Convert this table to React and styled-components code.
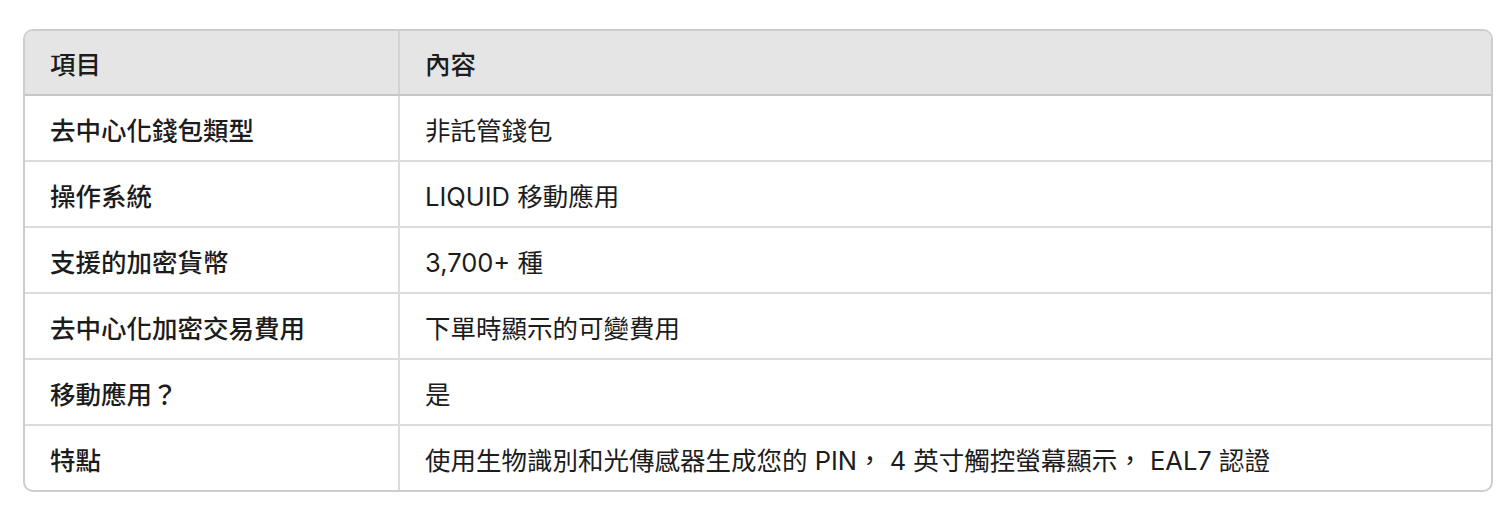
import styled, { createGlobalStyle } from 'styled-components';

const GlobalStyle = createGlobalStyle`
  body {
    margin: 0;
    background: #ffffff;
    font-family: Inter, "Noto Sans CJK TC", "Noto Sans", sans-serif;
    color: #1c1c1c;
  }
`;

const Page = styled.div`
  padding: 29px 19px 0 23px;
`;

const Frame = styled.div`
  border: 2px solid #cdcdcd;
  border-radius: 10px;
  overflow: hidden;
`;

const Table = styled.table`
  width: 100%;
  border-collapse: collapse;
  table-layout: fixed;
`;

const HeadCell = styled.th`
  background: #e5e5e5;
  height: 63px;
  padding: 0 0 0 25px;
  text-align: left;
  font-size: 25.5px;
  font-weight: 500;
  border-bottom: 2px solid #c6c6c6;
  width: ${props => props.w || 'auto'};
  & + & {
    border-left: 2px solid #d2d2d2;
  }
`;

const Row = styled.tr`
  & + & td {
    border-top: 2px solid #dcdcdc;
  }
`;

const Cell = styled.td`
  height: 64px;
  padding: 0 0 0 25px;
  font-size: 25.5px;
  font-weight: ${props => props.label ? 500 : 400};
  white-space: pre;
  & + & {
    border-left: 2px solid #dcdcdc;
  }
`;

const rows = [
  ['去中心化錢包類型', '非託管錢包'],
  ['操作系統', 'LIQUID 移動應用'],
  ['支援的加密貨幣', '3,700+ 種'],
  ['去中心化加密交易費用', '下單時顯示的可變費用'],
  ['移動應用？', '是'],
  ['特點', '使用生物識別和光傳感器生成您的 PIN， 4 英寸觸控螢幕顯示， EAL7 認證'],
];

export default function App() {
  return (
    <Page>
      <GlobalStyle />
      <Frame>
        <Table>
          <thead>
            <tr>
              <HeadCell w="348px">項目</HeadCell>
              <HeadCell>內容</HeadCell>
            </tr>
          </thead>
          <tbody>
            {rows.map(([k, v]) => (
              <Row key={k}>
                <Cell label>{k}</Cell>
                <Cell>{v}</Cell>
              </Row>
            ))}
          </tbody>
        </Table>
      </Frame>
    </Page>
  );
}
